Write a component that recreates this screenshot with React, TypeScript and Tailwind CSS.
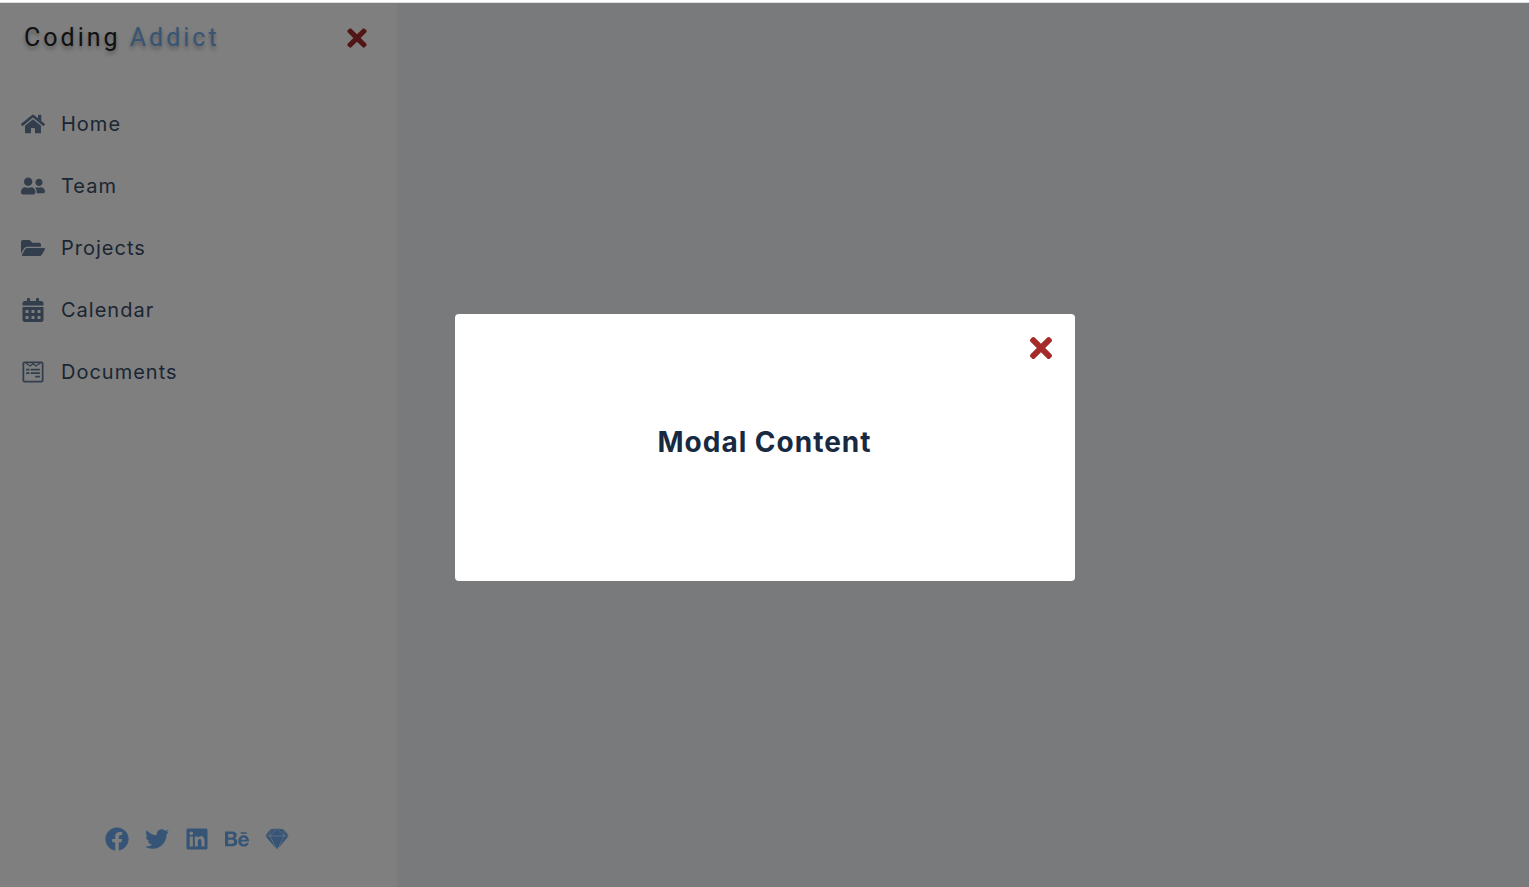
import React from "react";
import {
  FaTimes,
  FaHome,
  FaUserFriends,
  FaFolderOpen,
  FaCalendarAlt,
  FaWpforms,
  FaFacebook,
  FaTwitter,
  FaLinkedin,
  FaBehance,
  FaSketch,
} from "react-icons/fa";

const links = [
  { text: "Home", icon: FaHome },
  { text: "Team", icon: FaUserFriends },
  { text: "Projects", icon: FaFolderOpen },
  { text: "Calendar", icon: FaCalendarAlt },
  { text: "Documents", icon: FaWpforms },
];

const social = [
  { name: "Facebook", icon: FaFacebook },
  { name: "Twitter", icon: FaTwitter },
  { name: "LinkedIn", icon: FaLinkedin },
  { name: "Behance", icon: FaBehance },
  { name: "Sketch", icon: FaSketch },
];

function Sidebar() {
  return (
    <aside className="flex w-full max-w-[397px] flex-col bg-white pr-1">
      <div className="flex items-center justify-between pt-[15px] pr-[22px] pl-6">
        <p className="font-[Roboto,sans-serif] text-[25px] leading-10 tracking-[3px] text-[#222] [text-shadow:0_3px_4px_rgba(0,0,0,0.35)]">
          Coding <span className="text-[#6ca9ea]">Addict</span>
        </p>
        <button type="button" aria-label="Close sidebar" className="text-[28px] text-[#a52a2a]">
          <FaTimes />
        </button>
      </div>
      <ul className="mt-[35px]">
        {links.map(({ text, icon: Icon }) => (
          <li key={text}>
            <a href="#" className="flex items-center gap-4 px-[21px] py-4 text-xl leading-[30px] tracking-[1px] text-[#364d67]">
              <Icon className="size-6 text-[#657c96]" />
              {text}
            </a>
          </li>
        ))}
      </ul>
      <ul className="mt-auto flex justify-center gap-4 pb-9">
        {social.map(({ name, icon: Icon }) => (
          <li key={name}>
            <a href="#" aria-label={name} className="block text-2xl text-[#6ca9ea]">
              <Icon />
            </a>
          </li>
        ))}
      </ul>
    </aside>
  );
}

function Modal() {
  return (
    <div className="fixed inset-x-0 top-[3px] bottom-0 flex items-center justify-center bg-black/50 pt-[5px]">
      <div
        role="dialog"
        aria-modal="true"
        aria-labelledby="modal-title"
        className="relative flex w-[90vw] max-w-[620px] items-center justify-center rounded bg-white px-8 pt-[108px] pb-[119px]"
      >
        <h3 id="modal-title" className="text-[28px] leading-10 font-bold tracking-[1px] text-[#182a42]">
          Modal Content
        </h3>
        <button type="button" aria-label="Close modal" className="absolute top-[18px] right-[18px] text-[32px] text-[#a52a2a]">
          <FaTimes />
        </button>
      </div>
    </div>
  );
}

export default function App() {
  return (
    <div className="flex min-h-screen flex-col bg-white pt-[2px] font-[Inter,sans-serif]">
      <main className="flex grow border-t border-[#dcdee0] bg-[#f2f5f8]">
        <Sidebar />
        <Modal />
      </main>
    </div>
  );
}
